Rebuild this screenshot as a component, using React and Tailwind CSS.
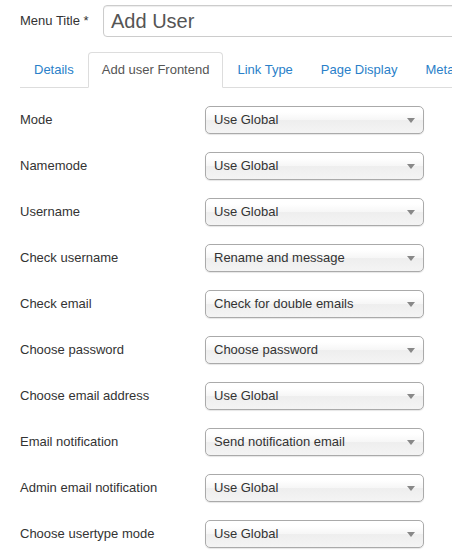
import React from 'react';

const rows = [
    ['Mode', 'Use Global'],
    ['Namemode', 'Use Global'],
    ['Username', 'Use Global'],
    ['Check username', 'Rename and message'],
    ['Check email', 'Check for double emails'],
    ['Choose password', 'Choose password'],
    ['Choose email address', 'Use Global'],
    ['Email notification', 'Send notification email'],
    ['Admin email notification', 'Use Global'],
    ['Choose usertype mode', 'Use Global'],
];

const tabs = ['Details', 'Add user Frontend', 'Link Type', 'Page Display', 'Metadata'];

const Select = ({ value }) => (
    <div className="relative w-[219px] h-[28px] rounded-[5px] border border-[#aaa] bg-[linear-gradient(#fff_20%,#f6f6f6_50%,#eee_52%,#f4f4f4_100%)] shadow-[0_1px_1px_rgba(0,0,0,0.1)] flex items-center pl-[8px] text-[13px] text-[#333]">
        <span>{value}</span>
        <div className="absolute right-[8px] top-[11px] w-0 h-0 border-l-[4px] border-r-[4px] border-t-[5px] border-l-transparent border-r-transparent border-t-[#888]" />
    </div>
);

export default function App() {
    return (
        <div className="w-[452px] h-[553px] overflow-hidden bg-white pl-[20px] font-['Liberation_Sans',Arial,sans-serif] text-[13px] text-[#333]">
            {/* Menu title */}
            <div className="flex items-center pt-[4px] h-[37px]">
                <span className="w-[83px] shrink-0">Menu Title *</span>
                <div className="h-[32px] w-[400px] shrink-0 rounded-l-[4px] border border-[#ccc] shadow-[inset_0_1px_1px_rgba(0,0,0,0.075)] flex items-center pl-[7px] text-[20px] text-[#555]">
                    Add User
                </div>
            </div>

            {/* Tabs */}
            <div className="mt-[15px] flex border-b border-[#ddd] whitespace-nowrap">
                {tabs.map((t, i) => (
                    <div
                        key={t}
                        className={`px-[13px] py-[8px] leading-[18px] -mb-px rounded-t-[4px] border ${
                            i === 1
                                ? 'border-[#ddd] border-b-white bg-white text-[#555]'
                                : 'border-transparent text-[#2a7fc9]'
                        }`}
                    >
                        {t}
                    </div>
                ))}
            </div>

            {/* Rows */}
            <div className="mt-[18px] flex flex-col gap-[18px]">
                {rows.map(([label, value]) => (
                    <div key={label} className="flex items-center">
                        <span className="w-[185px] shrink-0">{label}</span>
                        <Select value={value} />
                    </div>
                ))}
            </div>
        </div>
    );
}
